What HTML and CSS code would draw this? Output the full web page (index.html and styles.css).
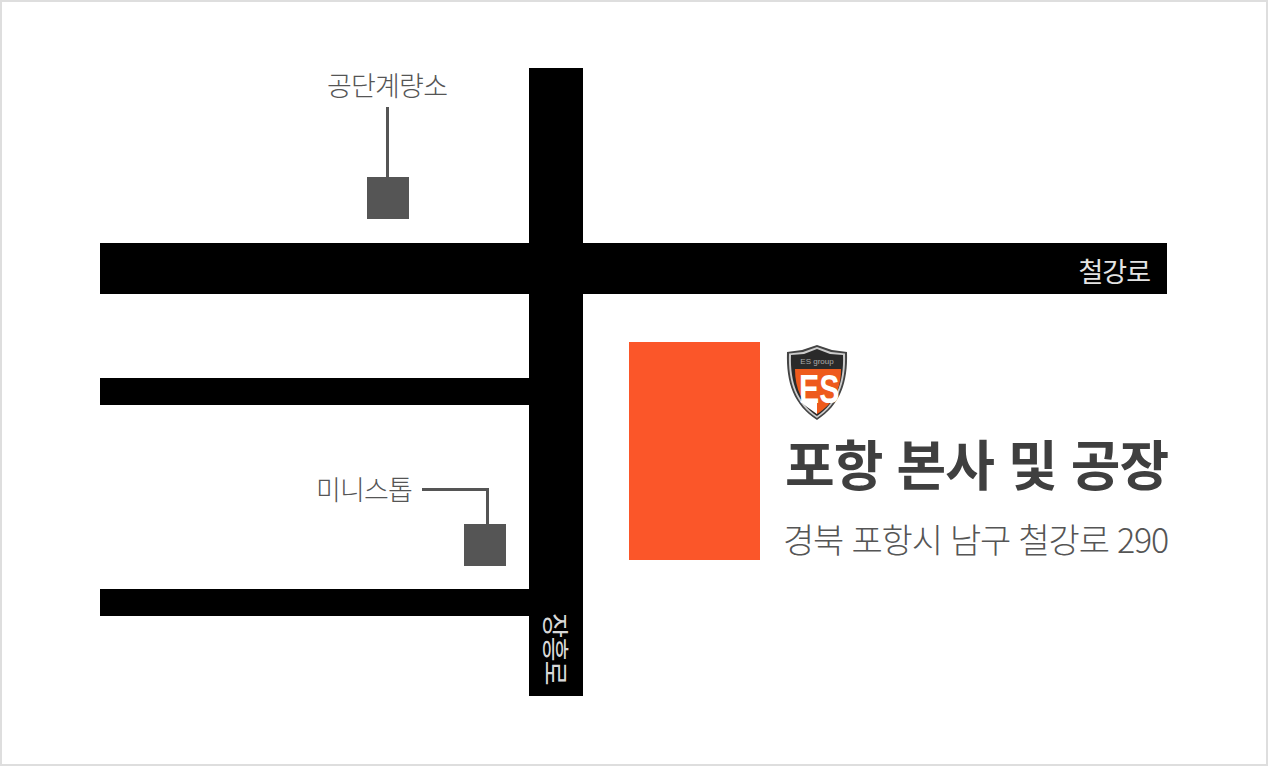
FILE: index.html
```html
<!DOCTYPE html>
<html lang="ko">
<head>
<meta charset="utf-8">
<title>포항 본사 및 공장</title>
<link rel="stylesheet" href="styles.css">
</head>
<body>
<main class="map">
  <div class="road road-h road-steel"><span class="road-name">철강로</span></div>
  <div class="road road-h road-mid"></div>
  <div class="road road-h road-low"></div>
  <div class="road road-v"><span class="road-name-v">장흥로</span></div>

  <div class="label label-scale">공단계량소</div>
  <div class="leader leader-scale"></div>
  <div class="marker marker-scale"></div>

  <div class="label label-mini">미니스톱</div>
  <div class="leader leader-mini-h"></div>
  <div class="leader leader-mini-v"></div>
  <div class="marker marker-mini"></div>

  <div class="site"></div>

  <section class="info">
    <svg class="logo" viewBox="0 0 66 80" width="66" height="80" aria-label="ES group">
      <path class="shield-out" d="M32 2 L47 7 L62 9 C63 40 55 62 32 77 C9 62 1 40 2 9 L17 7 Z"/>
      <path class="shield-in" d="M32 4 L46 9 L60 10.5 C61 40 53 61 32 75 C11 61 3 40 4 10.5 L18 9 Z"/>
      <path class="shield-dark" d="M32 6 L45 11 L58 12 C59 40 51 60 32 73 C13 60 5 40 6 12 L19 11 Z"/>
      <text class="logo-cap" x="32" y="21" text-anchor="middle">ES group</text>
      <path class="shield-orange" d="M10 26 H56 C56 46 49 60 32 71 C17 61 10 46 10 26 Z"/>
      <path class="shield-white" d="M32 58 V71 C25 66 20 63 15 58 Z"/>
      <text class="logo-es" transform="translate(14 60) scale(.74 1)">ES</text>
    </svg>
    <h1 class="title">포항 본사 및 공장</h1>
    <p class="address">경북 포항시 남구 철강로 290</p>
  </section>
</main>
</body>
</html>
```

FILE: styles.css
```css
html, body {
  margin: 0;
  padding: 0;
  background: #fff;
}

body {
  font-family: "Noto Sans CJK KR", "Noto Sans", sans-serif;
}

.map {
  position: relative;
  box-sizing: border-box;
  width: 1268px;
  height: 766px;
  border: 2px solid #dedede;
  background: #fff;
  overflow: hidden;
}

.road {
  position: absolute;
  background: #000;
}

.road-h { left: 98px; width: 1067px; }
.road-steel { top: 241px; height: 51px; display: flex; align-items: center; justify-content: flex-end; }
.road-mid { top: 376px; height: 27px; width: 440px; }
.road-low { top: 587px; height: 27px; width: 440px; }

.road-v {
  left: 527px;
  top: 66px;
  width: 54px;
  height: 628px;
}

.road-name {
  color: #e4e4e4;
  font-size: 27px;
  letter-spacing: -1px;
  line-height: 1;
  margin: 3px 17px 0 0;
}

.road-name-v {
  position: absolute;
  left: 12px;
  bottom: 11px;
  color: #d8d8d8;
  font-size: 27px;
  line-height: 30px;
  letter-spacing: -1px;
  writing-mode: vertical-rl;
  text-orientation: sideways;
}

.label {
  position: absolute;
  color: #555;
  font-size: 27px;
  font-weight: 300;
  line-height: 30px;
  letter-spacing: -0.8px;
  white-space: nowrap;
}

.label-scale { left: 325px; top: 68px; }
.label-mini { left: 314px; top: 472px; }

.leader {
  position: absolute;
  background: #555;
}

.leader-scale { left: 384px; top: 105px; width: 3px; height: 70px; }
.leader-mini-h { left: 420px; top: 486px; width: 67px; height: 3px; }
.leader-mini-v { left: 484px; top: 486px; width: 3px; height: 37px; }

.marker {
  position: absolute;
  width: 42px;
  height: 42px;
  background: #555;
}

.marker-scale { left: 365px; top: 175px; }
.marker-mini { left: 462px; top: 522px; }

.site {
  position: absolute;
  left: 627px;
  top: 340px;
  width: 131px;
  height: 218px;
  background: #fb5629;
}

.info {
  position: absolute;
  left: 783px;
  top: 341px;
}

.logo {
  display: block;
}

.shield-out { fill: #444; }
.shield-in { fill: #ccc; }
.shield-dark { fill: #2a2a2a; }
.shield-orange { fill: #ee5a1c; }
.shield-white { fill: #fff; }

.logo-cap {
  fill: #aaa;
  font-family: "Liberation Sans", sans-serif;
  font-size: 8px;
}

.logo-es {
  fill: #fff;
  font-family: "Liberation Sans", sans-serif;
  font-size: 41px;
  font-weight: 700;
}

.title {
  margin: 10px 0 0;
  color: #3f3f3f;
  font-size: 54px;
  font-weight: 700;
  line-height: 60px;
  letter-spacing: -1px;
  white-space: nowrap;
}

.address {
  margin: 26px 0 0 -2px;
  color: #555;
  font-size: 34px;
  font-weight: 300;
  line-height: 40px;
  letter-spacing: -1.2px;
  white-space: nowrap;
}
```
